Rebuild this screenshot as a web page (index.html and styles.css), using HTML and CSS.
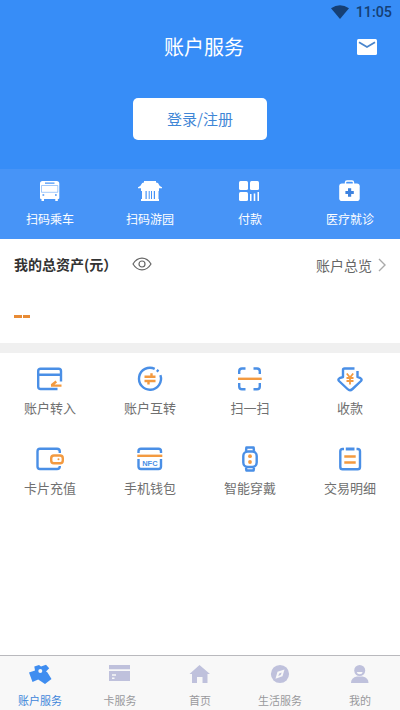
FILE: index.html
```html
<!DOCTYPE html>
<html lang="zh-CN">
<head>
<meta charset="utf-8">
<title>账户服务</title>
<link rel="stylesheet" href="styles.css">
</head>
<body>
<div class="app">
  <header class="header">
    <div class="status">
      <svg class="wifi" viewBox="0 0 18 14"><path d="M0 3.200Q9-2.800 18 3.200L9 14Z"/></svg>
      <span>11:05</span>
    </div>
    <div class="titlebar">
      <h1>账户服务</h1>
      <svg class="mail" viewBox="0 0 20 16"><rect width="20" height="16" rx="1.500" fill="#fff"/><path d="M2 3.200l8 4.800 8-4.800" fill="none" stroke="#4a86cc" stroke-width="1.800"/></svg>
    </div>
    <button class="login">登录/注册</button>
  </header>

  <nav class="quick">
    <a class="cell"><svg class="icon" viewBox="0 0 28 28"><path fill="#fff" fill-rule="evenodd" d="M6.500 4h14.200q2.600 0 2.600 2.600V21q0 1-1 1h-.5v2h-2.500v-2H8v2H5.500v-2H5q-1 0-1-1V6.600Q4 4 6.500 4ZM9 5.600v1.200h9.500V5.600ZM6.500 17.200v1.500h1.700v-1.500ZM19 17.200v1.500h1.700v-1.500Z"/><path d="M5.500 8.500v6.800h16.300V8.500Z" fill="none" stroke="#4794f7" stroke-width=".5"/></svg><span>扫码乘车</span></a>
    <a class="cell"><svg class="icon" viewBox="0 0 28 28"><path fill="#fff" d="M8 4h12v1.500l2 .5q1 3 4 4.200V11.300H23V14H5v-2.700H2v-1.100Q5 9 6.200 6L8 5.500ZM6 13h3.500v9H6ZM10.700 14h2v8h-2ZM13.700 14h1.300v8h-1.300ZM16 14h1.800v8H16ZM19 13h3.500v9H19ZM5 22h18v2H5Z"/></svg><span>扫码游园</span></a>
    <a class="cell"><svg class="icon" viewBox="0 0 28 28" fill="#fff"><rect x="3" y="4" width="9" height="9" rx="1.500"/><rect x="14" y="4" width="9" height="9" rx="1.500"/><rect x="3" y="15" width="9" height="9" rx="1.500"/><path d="M14 17h1.500v7H14ZM17.700 16.500h1.600V24h-1.600ZM21.500 15H23v9h-1.500Z"/></svg><span>付款</span></a>
    <a class="cell"><svg class="icon" viewBox="0 0 28 28"><path d="M9.500 8V5.500Q9.500 4 11 4h5q1.500 0 1.500 1.500V8" fill="none" stroke="#fff" stroke-width="1.400"/><rect x="3.200" y="6.500" width="20.500" height="17.500" rx="2.800" fill="#fff"/><path d="M13.600 11.300v8.400M9.400 15.500h8.400" stroke="#3d82df" stroke-width="3.200"/></svg><span>医疗就诊</span></a>
  </nav>

  <section class="assets">
    <div class="assets-head">
      <h2>我的总资产(元）</h2>
      <svg class="eye" viewBox="0 0 20 14"><path d="M1 7Q4.500 1.200 10 1.200T19 7Q15.500 12.800 10 12.800T1 7Z"/><circle cx="10" cy="7" r="3"/></svg>
      <a class="overview">账户总览<svg class="chevron" viewBox="0 0 8 14"><path d="M1 1l6 6-6 6"/></svg></a>
    </div>
    <div class="amount"><i></i><i></i></div>
  </section>

  <section class="services">
    <a class="cell"><svg class="icon line" viewBox="0 0 28 28"><path d="M21.500 24H4.500Q2.200 24 2.200 21.700V6q0-2.300 2.300-2.300h18.200Q25 3.700 25 6v10.500M2.200 9.800H25"/><path class="o" d="M15 20.600h10.500M15.500 20.300l4.800-3.800"/></svg><span>账户转入</span></a>
    <a class="cell"><svg class="icon line" viewBox="0 0 28 28"><path d="M18.700 3.800A11 11 0 1 0 24.400 10.200M20.800 5l1.700 1.500"/><path class="o" d="M8.500 11.700h11M15.500 8.200v3M19.500 16h-11M12.500 16v3.500"/></svg><span>账户互转</span></a>
    <a class="cell"><svg class="icon line" viewBox="0 0 28 28"><path d="M9.500 3.500H6Q3.200 3.500 3.200 6.300V9M17.500 3.500H21q2.800 0 2.800 2.800V9M3.200 18v3.500q0 2.800 2.800 2.800h3.500M23.800 18v3.500q0 2.800-2.800 2.800h-3.500"/><path class="o" d="M2 13.800h23.700"/></svg><span>扫一扫</span></a>
    <a class="cell"><svg class="icon line" viewBox="0 0 28 28"><path d="M18.500 3.500H8.500Q7 3.500 7 5v7L3.500 13.200Q1.600 14.200 3 16l8.500 8Q14 26.300 16.500 24l8.500-8q1.400-1.800-.5-2.800L21.500 12V6"/><path class="o thin" d="M10.800 8.500l3.200 4 3.200-4M10.500 13h7M10.500 16h7M14 12v7.500"/></svg><span>收款</span></a>
    <a class="cell"><svg class="icon line" viewBox="0 0 28 28"><path d="M23.800 8V6.500q0-2.800-2.800-2.800H4Q1.500 3.700 1.500 6.500v15Q1.500 24 4 24h17q2.800 0 2.800-2.800V21"/><rect class="o" x="15.200" y="10.500" width="11.600" height="7.800" rx="2.700"/><circle cx="22.500" cy="14.300" r="1" fill="#f39a40" stroke="none"/></svg><span>卡片充值</span></a>
    <a class="cell"><svg class="icon line" viewBox="0 0 28 28"><path d="M2.500 8V6.200q0-2.500 2.500-2.500h17.500q2.500 0 2.500 2.500V8M2.500 14v7.500Q2.500 24 5 24h17.500q2.500 0 2.500-2.500V14"/><path class="o" d="M1.300 10.800h25"/><text x="13.900" y="20.500">NFC</text></svg><span>手机钱包</span></a>
    <a class="cell"><svg class="icon line" viewBox="0 0 28 28"><rect x="7.300" y="6.500" width="13.400" height="15.500" rx="4.500"/><path d="M10 6l.4-3.500h7.200L18 6M10 22.500l.4 3h7.200l.4-3"/><circle class="dot" cx="14" cy="11.200" r="1.900"/><circle class="dot" cx="14" cy="17" r="1.900"/></svg><span>智能穿戴</span></a>
    <a class="cell"><svg class="icon line" viewBox="0 0 28 28"><path d="M8 4H6.500Q4.300 4 4.300 6.200V22q0 2.300 2.200 2.300h15.200Q24 24.300 24 22V6.200Q24 4 21.700 4H20.500"/><path stroke-width="3" d="M9.800 4h8.700"/><path class="o" d="M8.300 11.500h11.400M8.300 17.500h11.400"/></svg><span>交易明细</span></a>
  </section>

  <nav class="tabs">
    <a class="tab active"><svg class="icon" viewBox="0 0 28 28"><path d="M3 12.500L9 10.500 8.300 6.500 13 5l2 1.500L20 4.800l3.200 3.500L20 11.500l1.300.800 4.200 6.700-6.500 5-6.800-4.500L6.500 22Z"/><circle cx="14.300" cy="11" r="2" fill="#f8f8f8"/></svg><span>账户服务</span></a>
    <a class="tab"><svg class="icon" viewBox="0 0 28 28"><path fill-rule="evenodd" d="M3 5h21v4.300H3ZM3 11h21v10H3ZM6 14.300v1.500h4v-1.500ZM6 17.500V19h2.500v-1.500Z"/></svg><span>卡服务</span></a>
    <a class="tab"><svg class="icon" viewBox="0 0 28 28"><path d="M13.500 5L24 14h-2.500v9h-5v-6h-5.500v6H6v-9H3.500Z"/></svg><span>首页</span></a>
    <a class="tab"><svg class="icon" viewBox="0 0 28 28"><circle cx="14" cy="14" r="9.100"/><path d="M18.500 9.500l-2 6.700-7 2.500 2-7Z" fill="#f8f8f8"/><path d="M15.700 12.500l-1 2.500-2.500 1 1-2.500Z"/></svg><span>生活服务</span></a>
    <a class="tab"><svg class="icon" viewBox="0 0 28 28"><circle cx="13.700" cy="10.500" r="5.500"/><path d="M5 23q0-5.500 6-6.500h5.500q6 1 6 6.500Z"/><path d="M10.700 12h6q-.5 2.300-3 2.300t-3-2.300Z" fill="#f8f8f8"/></svg><span>我的</span></a>
  </nav>
</div>
</body>
</html>
```
FILE: styles.css
```css
* { box-sizing: border-box; }
body {
  margin: 0;
  background: #fff;
  font-family: "Noto Sans CJK SC", sans-serif;
  font-weight: 400;
}
h1, h2 { margin: 0; }
.app {
  display: flex;
  flex-direction: column;
  width: 400px;
  height: 710px;
  overflow: hidden;
}
.header { height: 169px; background: #378df7; }
.status {
  display: flex;
  justify-content: flex-end;
  align-items: center;
  gap: 7px;
  height: 24px;
  padding-right: 8px;
  color: #153f75;
  font: 500 14.3px/24px Roboto, sans-serif;
}
.wifi { width: 18px; height: 14px; fill: #153f75; }
.titlebar {
  display: grid;
  grid-template-columns: 1fr auto 1fr;
  align-items: center;
  height: 46px;
  padding: 0 23px;
}
.titlebar h1 {
  grid-column: 2;
  padding: 0 0 1px 8px;
  color: #fff;
  font-size: 20px;
  line-height: 30px;
  font-weight: 400;
}
.mail { width: 20px; height: 16px; justify-self: end; }
.login {
  display: block;
  width: 134px;
  height: 42px;
  margin: 28px auto 0;
  padding: 0 0 1px;
  border: 0;
  border-radius: 5px;
  background: #fff;
  color: #3f86d6;
  font: 400 15px/41px "Noto Sans CJK SC", sans-serif;
}
.icon { display: block; width: 28px; height: 28px; }
.cell, .tab { display: flex; flex-direction: column; align-items: center; }
.quick {
  display: grid;
  grid-template-columns: repeat(4, 1fr);
  height: 70px;
  padding-top: 8px;
  background: #4794f7;
  color: #fff;
  font-size: 12px;
  line-height: 20px;
}
.quick .icon { margin-bottom: 4px; }
.assets {
  height: 114px;
  padding: 0 14px;
  border-bottom: 10px solid #f0f0f0;
}
.assets-head { display: flex; align-items: center; height: 50px; }
.assets-head h2 { width: 118px; color: #333; font-size: 14px; font-weight: 700; white-space: nowrap; }
.eye { width: 20px; height: 14px; fill: none; stroke: #666; stroke-width: 1.2; }
.overview {
  display: flex;
  align-items: center;
  gap: 6px;
  height: 24px;
  margin-left: auto;
  padding-top: 2px;
  color: #666;
  font-size: 14px;
}
.chevron { width: 8px; height: 14px; fill: none; stroke: #aaa; stroke-width: 1.4; }
.amount { display: flex; gap: 1px; margin-top: 26px; }
.amount i { width: 7.5px; height: 2.5px; background: #e88b35; }
.services {
  display: grid;
  grid-template-columns: repeat(4, 1fr);
  grid-auto-rows: 80px;
  padding-top: 12px;
  color: #707070;
  font-size: 13px;
  line-height: 20px;
}
.services .icon { margin-bottom: 5px; }
.line { fill: none; stroke: #4a8fe6; stroke-width: 2.4; stroke-linejoin: round; }
.line .o { stroke: #f39a40; }
.line .thin { stroke-width: 1.8; }
.line .dot { fill: #f39a40; stroke: none; }
.line text {
  fill: #4a8fe6;
  stroke: none;
  font: 700 7.5px "Liberation Sans", sans-serif;
  text-anchor: middle;
}
.tabs {
  display: grid;
  grid-template-columns: repeat(5, 1fr);
  height: 55px;
  margin-top: auto;
  padding-top: 4px;
  border-top: 1px solid #b9b9bd;
  background: #f8f8f8;
  color: #98989c;
  font-size: 11px;
  line-height: 16px;
}
.tab .icon { margin-bottom: 4px; fill: #bfc1dc; }
.tab.active { color: #3f86da; }
.tab.active .icon { fill: #3f8df0; }
```
